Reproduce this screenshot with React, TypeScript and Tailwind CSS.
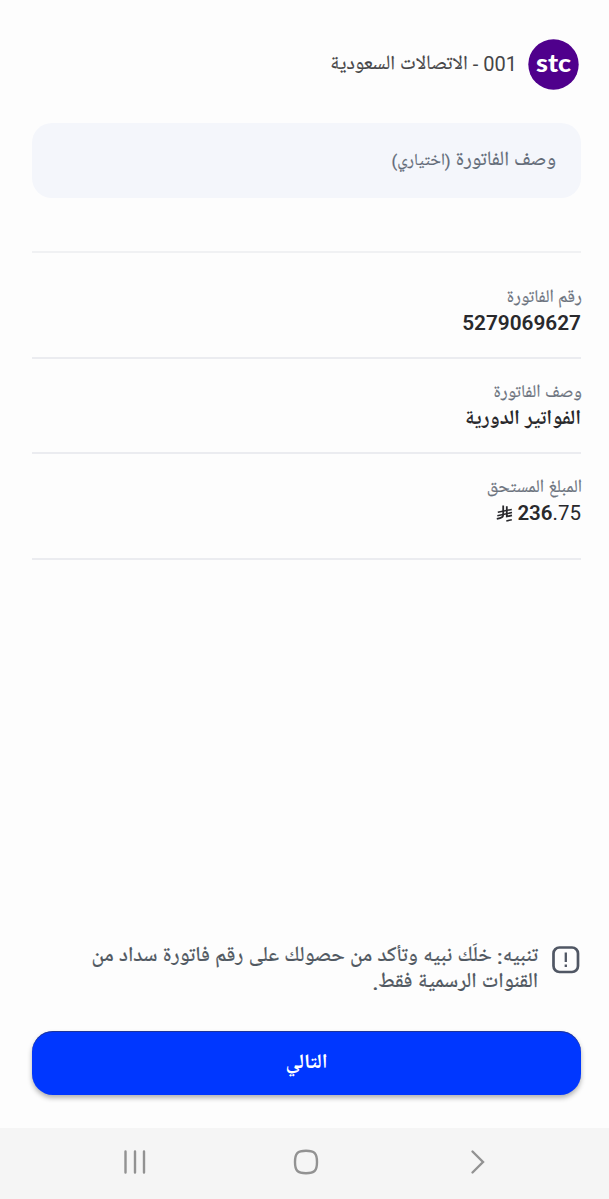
import React from 'react';

interface RowProps {
  label: string;
  className: string;
  children: React.ReactNode;
}

const RiyalIcon: React.FC = () => (
  <svg width="17" height="19" viewBox="0 0 17 19" fill="none" stroke="#29292d" strokeWidth="1.800">
    <path d="M7.200 1.500v9c0 2.600-1.300 3.500-6.400 4.400" />
    <path d="M10.800 2.200v10.300l5.200-1.100" />
    <path d="M1.800 8.300l14-2.900M1.300 11.700l14.700-3.200M10.300 17l5.500-1.300" strokeWidth="1.500" />
  </svg>
);

const DetailRow: React.FC<RowProps> = ({ label, className, children }) => (
  <div className={`flex flex-col items-start border-b-2 border-[#ebecf0] ${className}`}>
    <div className="-mr-px h-[26px] pt-px text-[17.900px] leading-[26px] whitespace-nowrap text-[#6c737e] [-webkit-text-stroke:0.2px]">
      {label}
    </div>
    <div className="flex h-[26px] items-center text-[21px] leading-[26px] whitespace-nowrap text-[#29292c]">
      {children}
    </div>
  </div>
);

const App: React.FC = () => {
  return (
    <div
      dir="rtl"
      className="flex h-[1199px] w-[609px] flex-col overflow-hidden bg-[#fdfdfd] font-['Roboto','Noto_Naskh_Arabic_UI','DejaVu_Sans',sans-serif]"
    >
      <main className="flex flex-1 flex-col pr-7 pl-8">
        <header className="mt-[38px] flex h-[52px] items-center pr-[2px]">
          <svg width="51" height="51" viewBox="0 0 51 51">
            <circle cx="25.500" cy="25.500" r="25.200" fill="#4f008c" />
            <text x="25.500" y="33" textAnchor="middle" direction="ltr" fill="#fff" fontFamily="Lato, sans-serif" fontSize="24" fontWeight="900" textLength="35" lengthAdjust="spacingAndGlyphs">
              stc
            </text>
          </svg>
          <div className="mr-[11px] flex items-center gap-[5px] whitespace-nowrap text-[#454547]">
            <span className="pt-px text-[20px]">001</span>
            <span className="text-[20px]">-</span>
            <span className="pt-[3px] text-[20.200px] [-webkit-text-stroke:0.2px]">الاتصالات السعودية</span>
          </div>
        </header>

        <div className="mt-[33px] flex h-[75px] items-center gap-[5px] rounded-[20px] bg-[#f4f6fb] pt-[2px] pr-[25px] whitespace-nowrap text-[#616a77] [-webkit-text-stroke:0.2px]">
          <span className="text-[20.300px]">وصف الفاتورة</span>
          <span className="text-[16.700px]">(اختياري)</span>
        </div>

        <section className="mt-[53px] border-t-2 border-[#f0f1f3]">
          <DetailRow label="رقم الفاتورة" className="h-[106px] pt-[31px]">
            <span className="text-[20.800px] font-semibold">5279069627</span>
          </DetailRow>
          <DetailRow label="وصف الفاتورة" className="h-[95px] pt-5">
            <span className="pt-[3px] text-[20.600px] font-bold">الفواتير الدورية</span>
          </DetailRow>
          <DetailRow label="المبلغ المستحق" className="h-[106px] pt-5">
            <span dir="ltr" className="flex items-center gap-[4px]">
              <RiyalIcon />
              <span className="text-[20.500px]">
                <span className="font-semibold">236</span>.75
              </span>
            </span>
          </DetailRow>
        </section>

        <div className="mt-auto mb-[35px] flex items-start text-[#505861]">
          <svg className="mt-px" width="30" height="30" viewBox="0 0 30 30" fill="none" stroke="#505764" strokeWidth="2.700">
            <rect x="2.500" y="2.500" width="24.500" height="24.500" rx="6" />
            <path d="M14.800 7.500v9.500M14.800 19.500v2.500" strokeWidth="2.300" />
          </svg>
          <p className="mr-[13px] text-[21.100px] leading-[26px] font-medium whitespace-nowrap [-webkit-text-stroke:0.2px]">
            تنبيه: خلَك نبيه وتأكد من حصولك على رقم فاتورة سداد من
            <br />
            القنوات الرسمية فقط.
          </p>
        </div>

        <button className="mb-[33px] h-[64px] shrink-0 rounded-[21px] bg-[#0037ff] pt-[3px] text-[20.500px] font-bold text-white shadow-[0_3px_5px_rgba(0,0,0,0.3),inset_0_1px_0_rgba(40,50,110,0.7)]">
          التالي
        </button>
      </main>

      <nav dir="ltr" className="h-[71px] shrink-0 bg-[#f5f5f5]">
        <svg width="609" height="71" viewBox="0 0 609 71" fill="none" stroke="#929292" strokeWidth="2.400" strokeLinecap="round">
          <path d="M125.500 23.500v21M135 23.500v21M144 23.500v21" />
          <path d="M306 22.700c8.500 0 11 2.500 11 11.300s-2.500 11.300-11 11.300-11-2.500-11-11.300 2.500-11.300 11-11.300z" />
          <path d="M472.500 23.500l10.500 10.500-10.500 10.500" />
        </svg>
      </nav>
    </div>
  );
};

export default App;
